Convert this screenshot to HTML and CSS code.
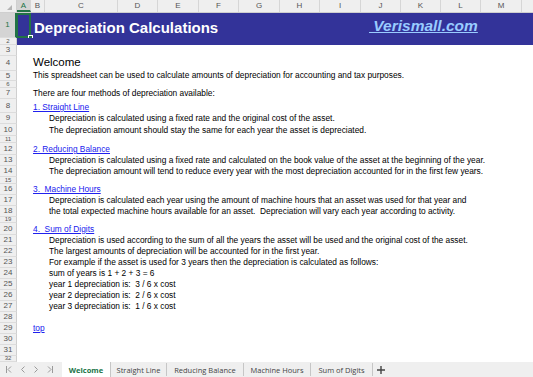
FILE: index.html
```html
<!DOCTYPE html>
<html lang="en">
<head>
  <meta charset="UTF-8" />
  <title>Depreciation Calculations</title>
  <link rel="stylesheet" href="styles.css">
</head>
<body>
  <div class="sheet">
    <div class="colhead">
      <div class="corner">
        <svg width="5" height="5" viewBox="0 0 5 5"><polygon points="5,0 5,5 0,5" fill="#b4b4b4"/></svg>
      </div>
      <div class="col sel w14">A</div>
      <div class="col w14">B</div>
      <div class="col w73">C</div>
      <div class="col w40">D</div>
      <div class="col w41">E</div>
      <div class="col w40">F</div>
      <div class="col w41">G</div>
      <div class="col w40">H</div>
      <div class="col w41">I</div>
      <div class="col w40">J</div>
      <div class="col w40">K</div>
      <div class="col w40">L</div>
      <div class="col w41">M</div>
      <div class="col rest"></div>
    </div>

    <div class="rows">
      <div class="row h25">
        <div class="rh sel">1</div>
        <div class="cells band">
          <span class="title">Depreciation Calculations</span>
          <span class="brand">&nbsp;Verismall.com</span>
          <div class="cursor"><i></i></div>
        </div>
      </div>
      <div class="row h7"><div class="rh tiny">2</div><div class="cells band"></div></div>
      <div class="row h11"><div class="rh">3</div><div class="cells"></div></div>
      <div class="row h15"><div class="rh">4</div><div class="cells"><span class="b welcome">Welcome</span></div></div>
      <div class="row h10"><div class="rh">5</div><div class="cells"><span class="b">This spreadsheet can be used to calculate amounts of depreciation for accounting and tax purposes.</span></div></div>
      <div class="row h7"><div class="rh tiny">6</div><div class="cells"></div></div>
      <div class="row h11"><div class="rh">7</div><div class="cells"><span class="b">There are four methods of depreciation available:</span></div></div>
      <div class="row h14"><div class="rh">8</div><div class="cells"><a class="b link" href="#">1. Straight Line</a></div></div>
      <div class="row h11"><div class="rh">9</div><div class="cells"><span class="c">Depreciation is calculated using a fixed rate and the original cost of the asset.</span></div></div>
      <div class="row h12"><div class="rh">10</div><div class="cells"><span class="c">The depreciation amount should stay the same for each year the asset is depreciated.</span></div></div>
      <div class="row h7"><div class="rh tiny">11</div><div class="cells"></div></div>
      <div class="row h12"><div class="rh">12</div><div class="cells"><a class="b link" href="#">2. Reducing Balance</a></div></div>
      <div class="row h11"><div class="rh">13</div><div class="cells"><span class="c">Depreciation is calculated using a fixed rate and calculated on the book value of the asset at the beginning of the year.</span></div></div>
      <div class="row h11"><div class="rh">14</div><div class="cells"><span class="c">The depreciation amount will tend to reduce every year with the most depreciation accounted for in the first few years.</span></div></div>
      <div class="row h7"><div class="rh tiny">15</div><div class="cells"></div></div>
      <div class="row h11"><div class="rh">16</div><div class="cells"><a class="b link" href="#">3.  Machine Hours</a></div></div>
      <div class="row h11"><div class="rh">17</div><div class="cells"><span class="c">Depreciation is calculated each year using the amount of machine hours that an asset was used for that year and</span></div></div>
      <div class="row h11"><div class="rh">18</div><div class="cells"><span class="c">the total expected machine hours available for an asset.  Depreciation will vary each year according to activity.</span></div></div>
      <div class="row h6"><div class="rh tiny">19</div><div class="cells"></div></div>
      <div class="row h12"><div class="rh">20</div><div class="cells"><a class="b link" href="#">4.  Sum of Digits</a></div></div>
      <div class="row h11"><div class="rh">21</div><div class="cells"><span class="c">Depreciation is used according to the sum of all the years the asset will be used and the original cost of the asset.</span></div></div>
      <div class="row h11"><div class="rh">22</div><div class="cells"><span class="c">The largest amounts of depreciation will be accounted for in the first year.</span></div></div>
      <div class="row h11"><div class="rh">23</div><div class="cells"><span class="c">For example if the asset is used for 3 years then the depreciation is calculated as follows:</span></div></div>
      <div class="row h11"><div class="rh">24</div><div class="cells"><span class="c">sum of years is 1 + 2 + 3 = 6</span></div></div>
      <div class="row h11"><div class="rh">25</div><div class="cells"><span class="c">year 1 depreciation is:  3 / 6 x cost</span></div></div>
      <div class="row h11"><div class="rh">26</div><div class="cells"><span class="c">year 2 depreciation is:  2 / 6 x cost</span></div></div>
      <div class="row h11"><div class="rh">27</div><div class="cells"><span class="c">year 3 depreciation is:  1 / 6 x cost</span></div></div>
      <div class="row h11"><div class="rh">28</div><div class="cells"></div></div>
      <div class="row h11"><div class="rh">29</div><div class="cells"><a class="b link" href="#">top</a></div></div>
      <div class="row h11"><div class="rh">30</div><div class="cells"></div></div>
      <div class="row h11"><div class="rh">31</div><div class="cells"></div></div>
      <div class="row h6"><div class="rh tiny">32</div><div class="cells"></div></div>
    </div>

    <div class="tabbar">
      <div class="nav">
        <svg width="6" height="7" viewBox="0 0 6 7"><path d="M0.5 0v7M5 0.5L2 3.5L5 6.5" fill="none" stroke="#9a9a9a"/></svg>
        <svg width="4" height="7" viewBox="0 0 4 7"><path d="M3.5 0.5L0.5 3.5L3.5 6.5" fill="none" stroke="#9a9a9a"/></svg>
        <svg width="4" height="7" viewBox="0 0 4 7"><path d="M0.5 0.5L3.5 3.5L0.5 6.5" fill="none" stroke="#9a9a9a"/></svg>
        <svg width="6" height="7" viewBox="0 0 6 7"><path d="M1 0.5L4 3.5L1 6.5M5.5 0v7" fill="none" stroke="#9a9a9a"/></svg>
      </div>
      <div class="tab active">Welcome</div>
      <div class="tab t2">Straight Line</div>
      <div class="tab t3">Reducing Balance</div>
      <div class="tab t4">Machine Hours</div>
      <div class="tab t5">Sum of Digits</div>
      <div class="add">
        <svg width="8" height="8" viewBox="0 0 8 8"><path d="M4 0v8M0 4h8" stroke="#444" stroke-width="1.4"/></svg>
      </div>
    </div>
  </div>
</body>
</html>
```

FILE: styles.css
```css
* {
  box-sizing: border-box;
}

body {
  margin: 0;
  background: #fff;
  font-family: "Liberation Sans", Arial, sans-serif;
  color: #000;
}

.sheet {
  width: 533px;
  height: 377px;
  overflow: hidden;
  display: flex;
  flex-direction: column;
}

/* column letters */
.colhead {
  display: flex;
  height: 13px;
  flex: none;
  background: #efefef;
  border-bottom: 1px solid #cfcfcf;
}

.corner {
  width: 17px;
  flex: none;
  border-right: 1px solid #cfcfcf;
  display: flex;
  align-items: flex-end;
  justify-content: flex-end;
  padding: 0 4px 2px 0;
}

.col {
  flex: none;
  border-right: 1px solid #d6d6d6;
  font-size: 8px;
  line-height: 12px;
  color: #555;
  text-align: center;
}

.col.sel {
  background: #d4d4d4;
  color: #217346;
  border-bottom: 2px solid #217346;
}

.w14 { width: 14px; }
.w40 { width: 40px; }
.w41 { width: 41px; }
.w73 { width: 73px; }
.rest { flex: 1; border-right: none; }

/* rows */
.rows {
  flex: 1;
  overflow: hidden;
}

.row {
  display: flex;
}

.h6 { height: 6px; }
.h7 { height: 7px; }
.h10 { height: 10px; }
.h11 { height: 11px; }
.h12 { height: 12px; }
.h14 { height: 14px; }
.h15 { height: 15px; }
.h25 { height: 25px; }

.rh {
  width: 17px;
  flex: none;
  background: #efefef;
  border-right: 1px solid #cfcfcf;
  border-bottom: 1px solid #dcdcdc;
  font-size: 8px;
  line-height: 8px;
  color: #555;
  display: flex;
  align-items: center;
  justify-content: center;
  overflow: hidden;
}

/* numbers of the thin spacer rows */
.rh.tiny {
  font-size: 6px;
  line-height: 5px;
}

.rh.sel {
  background: #d4d4d4;
  color: #217346;
  border-right: 2px solid #217346;
}

.cells {
  flex: 1;
  position: relative;
  display: flex;
  align-items: flex-end;
  white-space: pre;
  font-size: 8.35px;
  line-height: 10px;
  padding-bottom: 1px;
}

.b { padding-left: 16px; }
.c { padding-left: 32px; }

.link {
  color: #2020ee;
  text-decoration: underline;
}

.welcome {
  font-size: 11.5px;
  line-height: 13px;
  padding-bottom: 1px;
}

.band {
  background: #333399;
}

.title {
  flex: 0 0 344px;
  padding-left: 17px;
  padding-bottom: 1px;
  font-size: 15px;
  line-height: 17px;
  font-weight: bold;
  color: #fff;
}

.brand {
  padding-left: 8px;
  padding-bottom: 3px;
  font-size: 15.5px;
  line-height: 17px;
  font-weight: bold;
  font-style: italic;
  color: #99ccff;
  text-decoration: underline;
}

/* active cell A1 */
.cursor {
  position: absolute;
  left: -1px;
  top: 0;
  width: 15px;
  height: 25px;
  border: 2px solid #217346;
}

.cursor i {
  position: absolute;
  right: -4px;
  bottom: -4px;
  width: 5px;
  height: 5px;
  background: #217346;
  border: 1px solid #fff;
}

/* sheet tabs */
.tabbar {
  height: 15px;
  flex: none;
  display: flex;
  background: #efefef;
  font-family: "Open Sans", "Noto Sans", sans-serif;
  font-size: 7.5px;
  color: #444;
}

.nav {
  width: 62px;
  display: flex;
  align-items: center;
  gap: 9px;
  padding-left: 6px;
}

.tab {
  display: flex;
  align-items: center;
  justify-content: center;
  border-right: 1px solid #c6c6c6;
  margin: 1px 0;
}

.tab.active {
  width: 49px;
  margin: 0;
  background: #fff;
  color: #217346;
  font-weight: bold;
}

.t2 { width: 56px; }
.t3 { width: 77px; }
.t4 { width: 67px; }
.t5 { width: 62px; }

.add {
  display: flex;
  align-items: center;
  padding-left: 4px;
}
```
